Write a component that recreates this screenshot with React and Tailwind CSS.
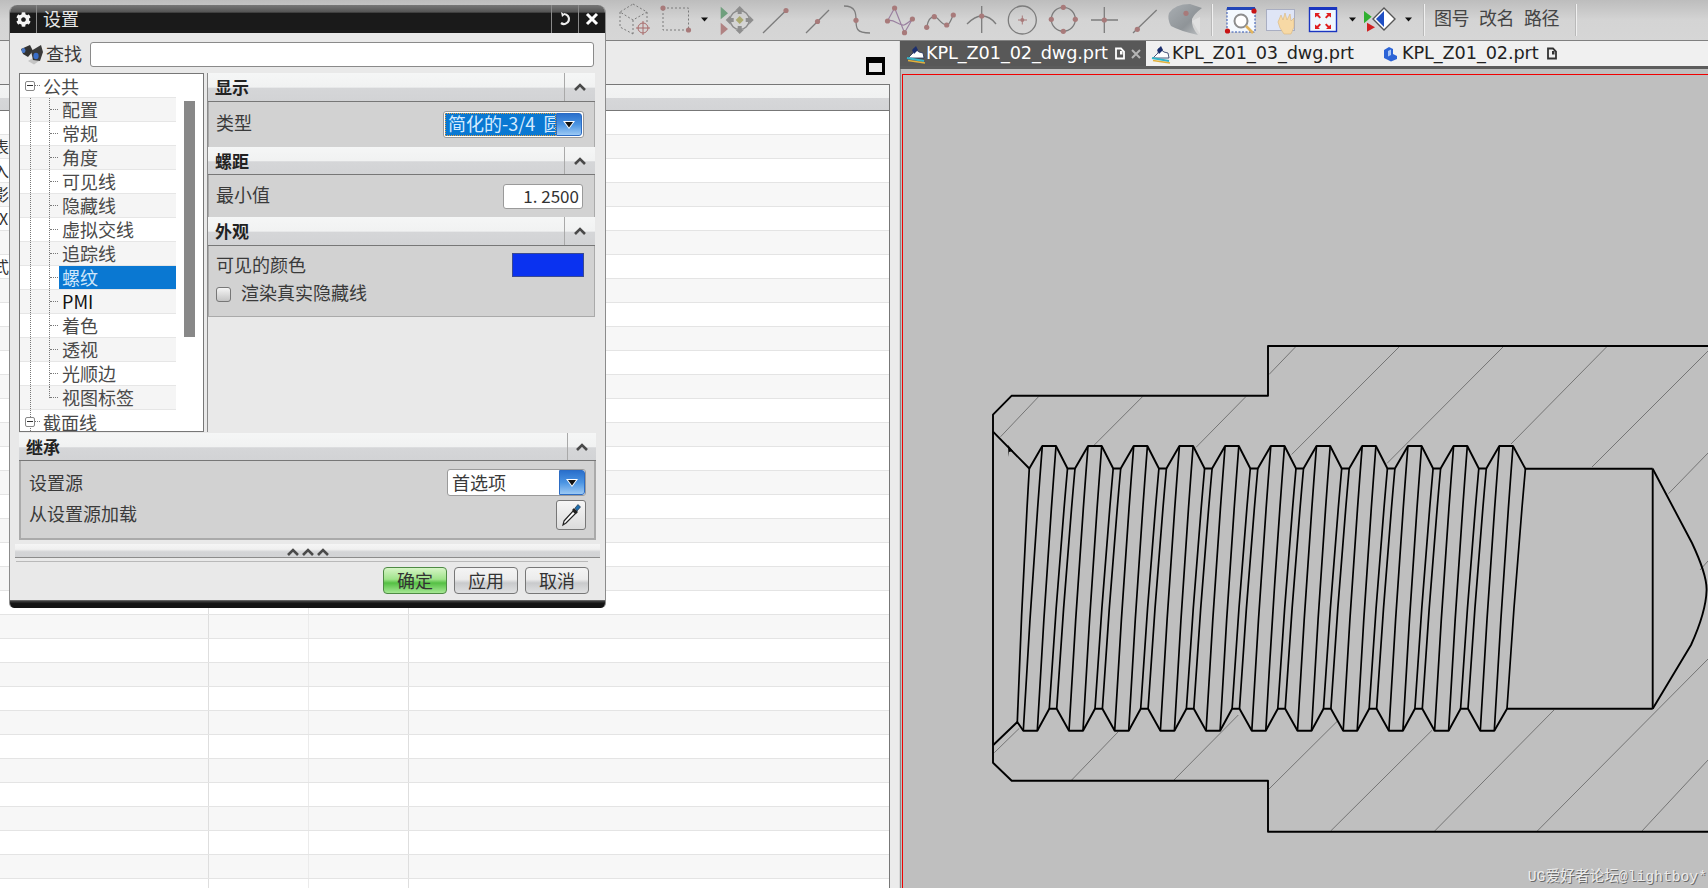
import { FaCog } from "react-icons/fa";

const treeRows = ["公共", "配置", "常规", "角度", "可见线", "隐藏线", "虚拟交线", "追踪线", "螺纹", "PMI", "着色", "透视", "光顺边", "视图标签", "截面线"];
const sideText = { 1: "表", 2: "入", 3: "影", 4: "X", 6: "式" };
const rowIds = Array.from({ length: 33 }, (_, i) => i);

const PITCH = 45.7;
const teeth = Array.from({ length: 11 }, (_, k) => k);

const topThread =
	"M993 431.7 L1029.3 468.5 " +
	teeth.map((k) => {
		const o = k * PITCH;
		const crest = `L${1042.3 + o} 446 L${1056 + o} 446 `;
		return k < 10 ? crest + `L${1067.5 + o} 468.5 L${1075 + o} 468.5 ` : crest;
	}).join("") +
	"L1525.4 468.8 L1652.7 468.8";

const bottomThread =
	"M993.3 745 L1017.3 722 L1023.3 730.7 " +
	teeth.map((k) => {
		const o = k * PITCH;
		const deep = `L${1023.3 + o} 730.7 L${1037.3 + o} 730.7 `;
		return k < 10 ? deep + `L${1049.3 + o} 708.7 L${1056.7 + o} 708.7 ` : deep;
	}).join("") +
	"L1507 708.7 L1652.7 708.7";

const helix = (x1, y1, x2, y2) => `M${x1} ${y1} Q${(x1 + x2) / 2 - 1.5} ${(y1 + y2) / 2} ${x2} ${y2}`;

const helixLines = [
	helix(1029.3, 468.5, 1017.3, 722),
	helix(1525.4, 468.8, 1507, 708.7),
	...teeth.flatMap((k) => {
		const o = k * PITCH;
		const crest = [
			helix(1042.3 + o, 446, 1023.3 + o, 730.7),
			helix(1056 + o, 446, 1037.3 + o, 730.7),
		];
		if (k === 10) return crest;
		return [
			...crest,
			helix(1067.5 + o, 468.5, 1049.3 + o, 708.7),
			helix(1075 + o, 468.5, 1056.7 + o, 708.7),
		];
	}),
];

const hatching = [
	[1296.4, 346, 1269, 374.5], [1399, 347, 1291.6, 454.5], [1503, 347, 1387, 463.4], [1606.5, 347, 1511, 444],
	[1708, 351, 1592, 467], [1708, 453, 1668.5, 493.7], [1708, 561, 1700, 570], [1038.7, 396.5, 1000.5, 436.8],
	[1142.7, 396.5, 1093.6, 445.7], [1246, 396.5, 1196, 447.4], [1019.3, 728.3, 994.3, 752.7], [1118.3, 731.7, 1071.7, 780],
	[1238.3, 715, 1174, 780], [1337, 721.5, 1269, 789], [1432, 730.3, 1330.7, 831], [1554, 710, 1434.7, 831],
	[1708, 659, 1537.3, 831], [1708, 760, 1642, 831],
];

// toolbar icons use page coordinates, the viewBox shifts them into their box
function Ico({ x, w, children }) {
	return (
		<svg width={w} height={40} viewBox={`${x} 0 ${w} 40`} className="shrink-0">
			{children}
		</svg>
	);
}

const Dot = ({ x, y, r = 2.6 }) => <circle cx={x} cy={y} r={r} fill="#a87a7a" />;

function Drop({ x }) {
	return (
		<Ico x={x} w={16}>
			<path d={`M${x + 5} 17.5 h7 l-3.5 4 z`} fill="#111" />
		</Ico>
	);
}

function Separator() {
	return <div className="w-[2px] h-[32px] bg-[#f0f0f0] border-l border-[#b9b9b9]" />;
}

function Chevron({ className = "" }) {
	return (
		<svg width="14" height="10" viewBox="0 0 14 10" className={className}>
			<path d="M2 8 L7 3 L12 8" fill="none" stroke="#4a4a4a" strokeWidth="2.6" />
		</svg>
	);
}

function SectionHeader({ title, h, sep }) {
	return (
		<div className={`${h} flex items-stretch border-b border-[#777] bg-[linear-gradient(#f5f6f6_0%,#f1f2f2_50%,#d5d6d8_55%,#d2d3d5_100%)]`}>
			<span className="flex-1 pl-[7px] text-[17px] font-bold text-[#222] leading-[28px]">{title}</span>
			<div className={`${sep} flex items-center justify-center border-l border-[#a9a9a9]`}>
				<Chevron />
			</div>
		</div>
	);
}

function DropButton() {
	return (
		<div className="w-[26px] h-full flex items-center justify-center rounded-r-[3px] border border-[#2c6cc4] bg-[linear-gradient(#2a70cc_0%,#4b94e2_50%,#9cc9f4_100%)]">
			<svg width="14" height="10" viewBox="0 0 14 10">
				<path d="M1 1 H13 L7 9 Z" fill="#fff" />
				<path d="M3 2 H11 L7 7.5 Z" fill="#111" />
			</svg>
		</div>
	);
}

function DialogButton({ label, green }) {
	const tone = green
		? "border-[#4e8a44] bg-[linear-gradient(#d6f5c6_0%,#9fe38a_45%,#55c044_60%,#a6e894_100%)]"
		: "border-[#777] bg-[linear-gradient(#f4f4f4_0%,#ececec_45%,#c9cacc_60%,#dfe0e1_100%)]";
	return (
		<button className={`w-[64px] h-[27px] rounded-[4px] border text-[18px] leading-[22px] pb-[2px] text-[#333] ${tone}`}>
			{label}
		</button>
	);
}

function DocMark({ color }) {
	return (
		<svg width="12" height="13" viewBox="0 0 12 13" className="shrink-0">
			<path d="M2 1.5 H7 L10 4.5 V11.5 H2 Z" fill="none" stroke={color} strokeWidth="1.8" />
			<path d="M6 4 H8.5 V7.5 H6 Z" fill={color} />
		</svg>
	);
}

function DrawingMark() {
	return (
		<svg width="20" height="20" viewBox="0 0 20 20" className="shrink-0">
			<path d="M2 14 L7 9 L8 4 L13 8 L17 9 L18 14 Z" fill="#fff" stroke="#20305a" strokeWidth="0.8" />
			<path d="M6 6 L10 2 L12 6 L8 10 Z" fill="#1c2f6e" />
			<path d="M1 14 L18 17" stroke="#35b4c8" strokeWidth="1.8" />
			<path d="M2 16.5 L19 19" stroke="#e2b13c" strokeWidth="1.6" />
		</svg>
	);
}

export default function App() {
	return (
		<div className="relative w-[1708px] h-[888px] overflow-hidden bg-[#ebebeb] font-['Noto_Sans_CJK_SC',sans-serif]">
			{/* Toolbar */}
			<div className="h-[41px] pl-[616px] flex items-center border-b border-[#808080] bg-linear-to-b from-[#bdbdbd] via-[#d4d4d4] to-[#d6d6d6]">
				<Ico x={616} w={40}>
					<g fill="none" stroke="#7a7a7a" strokeDasharray="2 2">
						<path d="M633 4 L647 12 L633 20 L620 12 Z M620 12 V27 L633 34 M647 12 V22 M633 20 V34" />
					</g>
					<g fill="none" stroke="#a86a6a">
						<circle cx="643" cy="28" r="5" />
						<path d="M636 28 H650 M643 21 V35" />
					</g>
				</Ico>
				<Ico x={656} w={40}>
					<rect x="663" y="8" width="25.5" height="22" fill="none" stroke="#7a7a7a" strokeDasharray="2 2" />
					<Dot x={663} y={8} />
					<Dot x={688.5} y={30} />
				</Ico>
				<Drop x={696} />
				<Ico x={712} w={44}>
					<path d="M720.7 6.7 L728 13.3 L720.7 19.3 Z" fill="#6f9f7d" />
					<path d="M720.7 22.7 L728 29 L720.7 35.3 Z" fill="#b08282" />
					<circle cx="739.7" cy="20" r="9.5" fill="none" stroke="#8b8b8b" strokeWidth="1.4" />
					<path d="M739.7 6 l4.5 4.5 h-2.5 v3.5 h-4 v-3.5 h-2.5 z M739.7 34 l4.5 -4.5 h-2.5 v-3.5 h-4 v3.5 h-2.5 z M725.7 20 l4.5 -4.5 v2.5 h3.5 v4 h-3.5 v2.5 z M753.7 20 l-4.5 -4.5 v2.5 h-3.5 v4 h3.5 v2.5 z" fill="#8e8e8e" />
					<path d="M739.7 16 L743.7 20 L739.7 24 L735.7 20 Z" fill="#aaa96f" />
				</Ico>
				<Ico x={756} w={40}>
					<path d="M763 33 L786 10.5" stroke="#7c7c7c" strokeWidth="1.3" />
					<Dot x={786} y={10.5} />
				</Ico>
				<Ico x={796} w={42}>
					<path d="M806 33 L829 10" stroke="#7c7c7c" strokeWidth="1.3" />
					<Dot x={817.5} y={21.5} />
				</Ico>
				<Ico x={838} w={40}>
					<path d="M844 6 C856 6 856 14 856 20 C856 28 856 33 870 33" fill="none" stroke="#7c7c7c" strokeWidth="1.3" />
					<Dot x={856} y={20.3} />
				</Ico>
				<Ico x={878} w={40}>
					<path d="M894.6 8 L887.5 21 C893 18 899 26 904 25 C907 24 910 21 912.4 19 L904.5 32.7 L894.6 8" fill="none" stroke="#9a80a0" strokeWidth="1.2" />
					<Dot x={894.6} y={8} />
					<Dot x={887.5} y={21} />
					<Dot x={912.4} y={19} />
					<Dot x={904.5} y={32.7} />
				</Ico>
				<Ico x={918} w={42}>
					<path d="M926.7 27.3 C928 20 931 16.7 934.3 16.7 C938 16.7 941 25 946.7 25 C950 25 951 19 953.3 15" fill="none" stroke="#7c7c7c" strokeWidth="1.3" />
					<Dot x={926.7} y={27.3} />
					<Dot x={934.3} y={16.7} />
					<Dot x={946.7} y={25} />
					<Dot x={953.3} y={15} />
				</Ico>
				<Ico x={960} w={42}>
					<path d="M981.7 6 V33 M967 24 Q975 16 981.7 16 Q990 16 996 24" fill="none" stroke="#7c7c7c" strokeWidth="1.3" />
					<Dot x={981.7} y={16} />
				</Ico>
				<Ico x={1002} w={42}>
					<circle cx="1022.3" cy="20" r="14" fill="none" stroke="#7c7c7c" strokeWidth="1.3" />
					<path d="M1018 20 H1027 M1022.3 15.5 V24.5" stroke="#a87a7a" />
					<Dot x={1022.3} y={20} r={2} />
				</Ico>
				<Ico x={1044} w={42}>
					<circle cx="1063.3" cy="19.3" r="12" fill="none" stroke="#7c7c7c" strokeWidth="1.3" />
					<Dot x={1063.3} y={7.3} />
					<Dot x={1075.3} y={19.3} />
					<Dot x={1063.3} y={31.3} />
					<Dot x={1051.3} y={19.3} />
				</Ico>
				<Ico x={1086} w={40}>
					<path d="M1091 20 H1118 M1104.3 7 V33" stroke="#7c7c7c" strokeWidth="1.3" />
					<Dot x={1104.3} y={20} />
				</Ico>
				<Ico x={1126} w={36}>
					<path d="M1133 33 L1156.7 10" stroke="#7c7c7c" strokeWidth="1.3" />
					<Dot x={1137.3} y={29.3} />
				</Ico>
				<Ico x={1162} w={44}>
					<defs>
						<linearGradient id="surf" x1="0" y1="0" x2="1" y2="1">
							<stop offset="0" stopColor="#a9aeb2" />
							<stop offset="0.6" stopColor="#8f9498" />
							<stop offset="1" stopColor="#c0c3c5" />
						</linearGradient>
					</defs>
					<path d="M1169 13 Q1175 4 1190 4 L1202 8 Q1194 14 1192 19 Q1191 27 1198 35 Q1180 31 1171 26 Q1167 19 1169 13 Z" fill="url(#surf)" />
					<path d="M1192 21 L1200 17 L1200 34 Z" fill="#e0e0e0" />
					<Dot x={1186} y={13.3} />
				</Ico>
				<div className="w-[12px] flex justify-center">
					<Separator />
				</div>
				<Ico x={1218} w={42}>
					<rect x="1227" y="8" width="28" height="24" fill="#f4f9fe" stroke="#2b4fb0" strokeDasharray="2 1.5" />
					<rect x="1227" y="7" width="28" height="3" fill="#2245b8" />
					<circle cx="1241" cy="21" r="6.5" fill="#fff" stroke="#8d8d8d" strokeWidth="2" />
					<path d="M1246 26 L1253 33" stroke="#e2b45c" strokeWidth="2.6" />
					<circle cx="1254" cy="11" r="2.6" fill="#c81414" />
					<circle cx="1227.5" cy="31" r="2.6" fill="#c81414" />
				</Ico>
				<Ico x={1260} w={42}>
					<rect x="1266.5" y="9.5" width="28" height="21" fill="#dfe5f6" stroke="#a9aec2" />
					<path d="M1278 22 L1281 15 L1283 20 L1285 13 L1287 20 L1290 14 L1291 21 L1294 18 L1294 27 L1291 34 L1284 34 L1280 28 Z" fill="#f7d9a5" stroke="#d8b67c" strokeWidth="0.6" />
				</Ico>
				<Ico x={1302} w={42}>
					<rect x="1309.5" y="8" width="27" height="23.5" fill="#eff8fe" stroke="#1a35c0" strokeWidth="1.4" />
					<rect x="1309" y="7" width="28" height="3" fill="#1a35c0" />
					<path d="M1315 13 h5 l-1.6 1.6 l2.6 2.6 l-1.4 1.4 l-2.6 -2.6 l-2 1.6 z M1331 13 h-5 l1.6 1.6 l-2.6 2.6 l1.4 1.4 l2.6 -2.6 l2 1.6 z M1315 29 h5 l-1.6 -1.6 l2.6 -2.6 l-1.4 -1.4 l-2.6 2.6 l-2 -1.6 z M1331 29 h-5 l1.6 -1.6 l-2.6 -2.6 l1.4 -1.4 l2.6 2.6 l2 -1.6 z" fill="#e02020" />
				</Ico>
				<Drop x={1344} />
				<Ico x={1360} w={40}>
					<path d="M1364 11 L1371.7 16.7 L1364 23.3 Z" fill="#2fb030" />
					<path d="M1367 22.7 L1375 27.3 L1367 31.7 Z" fill="#d02020" />
					<path d="M1384 8 L1395 19 L1384 30 L1373 19 Z" fill="#fff" stroke="#555" strokeWidth="1.4" />
					<path d="M1384 11 L1384 27 L1376 19 Z" fill="#1f4fc4" />
				</Ico>
				<Drop x={1400} />
				<div className="w-[16px] flex justify-center">
					<Separator />
				</div>
				<div className="pl-[2px] pb-[5px] w-[143px] flex gap-[10px] text-[18px] text-[#444] whitespace-nowrap">
					<span className="tracking-[-0.5px]">图号</span>
					<span className="tracking-[-0.5px]">改名</span>
					<span className="tracking-[-0.5px]">路径</span>
				</div>
				<Separator />
			</div>

			<div className="flex h-[847px]">
				{/* Part list panel */}
				<div className="w-[900px] shrink-0 border-r border-[#d8d8d8]">
					<div className="h-[43px] flex justify-end items-start pt-[16px] pr-[14px]">
						<div className="w-[19px] h-[18px] border-[3px] border-t-[6px] border-black" />
					</div>
					<div className="mr-[9px] border-t border-r border-[#777] bg-white">
						<div className="h-[26px] border-b border-[#777] bg-[linear-gradient(#f3f4f4_0%,#f0f1f1_50%,#d6d7d9_52%,#d3d4d6_100%)]" />
						{rowIds.map((id) => (
							<div key={id} className={`h-[24px] grid grid-cols-[209px_100px_100px_1fr] border-b border-[#e4e4e4] ${id % 2 ? "bg-[#f7f7f7]" : "bg-white"}`}>
								<div className="border-r border-[#dedede] overflow-hidden">
									<span className={`block text-[16px] leading-[23px] text-[#333] ${id === 4 ? "-ml-[1px]" : "-ml-[7px]"}`}>{sideText[id]}</span>
								</div>
								<div className="border-r border-[#ebebeb]" />
								<div className="border-r border-[#dedede]" />
								<div />
							</div>
						))}
					</div>
				</div>

				{/* Drawing area */}
				<div className="flex-1 flex flex-col min-w-0">
					<div className="h-[25px] flex items-stretch bg-[#f0f0f0] text-[17.7px] leading-[25px] font-['DejaVu_Sans',sans-serif] whitespace-nowrap">
						<div className="w-[246px] pl-[6px] flex items-center bg-[#585858] text-white">
							<DrawingMark />
							<span className="tracking-[-0.1px]">KPL_Z01_02_dwg.prt</span>
							<span className="ml-[6px]">
								<DocMark color="#fff" />
							</span>
							<svg width="10" height="10" viewBox="0 0 10 10" className="ml-[5px]">
								<path d="M1 1 L9 9 M9 1 L1 9" stroke="#b5b5b5" strokeWidth="2" />
							</svg>
						</div>
						<div className="w-[237px] pl-[5px] flex items-center gap-px text-[#222]">
							<DrawingMark />
							<span className="tracking-[-0.1px]">KPL_Z01_03_dwg.prt</span>
						</div>
						<div className="flex items-center gap-[4px] text-[#222]">
							<svg width="15" height="16" viewBox="0 0 15 16" className="shrink-0">
								<path d="M1 12 V4 L6 1 L10 3 V8 L14 10 V13 L8 15.5 Z" fill="#2b63d6" />
								<path d="M5 5 L8 3.5 V9 L5 10.5 Z" fill="#a9c6f5" />
							</svg>
							<span className="tracking-[-0.1px]">KPL_Z01_02.prt</span>
							<span className="ml-[3px]">
								<DocMark color="#333" />
							</span>
						</div>
					</div>
					<div className="h-[3px] bg-[#5c5c5c]" />
					<div className="flex-1 min-h-0 bg-[#bfbfbf] pt-[5px] pl-[1px] border-l border-[#8a8a8a]">
						<div className="relative h-full border-t border-l border-[#f00000]">
							<svg viewBox="903 75 806 813" className="block w-[806px] h-[813px]">
								<g stroke="#555" strokeWidth="0.7">
									{hatching.map((l, i) => (
										<line key={i} x1={l[0]} y1={l[1]} x2={l[2]} y2={l[3]} />
									))}
								</g>
								<g fill="none" stroke="#000" strokeWidth="1.9" strokeLinejoin="round">
									<path d="M1709 346 H1268 V395.8 H1011.5 L993 414.7 V762.7 L1011.7 780.7 H1268 V831.8 H1709" />
									<path d={topThread} />
									<path d={bottomThread} />
									<path d="M1652.7 468.8 V708.7" />
									<path d="M1652.7 468.8 L1692 543 Q1707 575 1706.6 590 Q1706 612 1691 645 L1652.7 708.7" />
									{helixLines.map((d, i) => (
										<path key={i} d={d} strokeWidth="1.7" />
									))}
								</g>
								<path d="M1008 445 L1013 451 L1009 452 L1008.6 457 Z" fill="#000" />
							</svg>
							<span className="absolute right-[1px] bottom-[2px] text-[14.7px] leading-[18px] text-[#ececec] font-['Liberation_Mono','Noto_Sans_CJK_SC',monospace] [text-shadow:1px_1px_0_#6a6a6a] whitespace-nowrap">
								UG爱好者论坛@lightboy*
							</span>
						</div>
					</div>
				</div>
			</div>

			{/* Settings dialog */}
			<div className="absolute left-[9px] top-[5px] w-[597px] h-[603px] flex flex-col rounded-t-[8px] rounded-b-[5px] overflow-hidden bg-[#e9e9e9] border-x border-[#8c8c8c]">
				<div className="h-[28px] shrink-0 flex items-stretch text-[#e6e6e6] bg-[linear-gradient(#777_0%,#555_25%,#1a1a1a_30%,#1a1a1a_100%)]">
					<div className="w-[27px] flex items-center justify-center border-r border-[#8a8a8a]">
						<FaCog size={15} color="#f4f4f4" />
					</div>
					<span className="flex-1 pl-[6px] text-[18px] leading-[26px]">设置</span>
					<div className="w-[27px] flex items-center justify-center border-l border-[#8a8a8a]">
						<svg width="14" height="14" viewBox="0 0 14 14">
							<path d="M6 2 A5 5 0 1 1 3 11" fill="none" stroke="#eee" strokeWidth="2.2" />
							<path d="M3 0 L7 2.5 L4 5 Z" fill="#eee" />
						</svg>
					</div>
					<div className="w-[27px] flex items-center justify-center border-l border-[#8a8a8a]">
						<svg width="14" height="14" viewBox="0 0 14 14">
							<path d="M2 2 L12 12 M12 2 L2 12" stroke="#fff" strokeWidth="3" />
						</svg>
					</div>
				</div>

				{/* Search */}
				<div className="h-[40px] shrink-0 flex items-center pl-[10px] pr-[11px] pt-[2px]">
					<svg width="24" height="22" viewBox="0 0 24 22" className="shrink-0">
						<path d="M8 18 L14 21.5 L19 18 L13 15 Z" fill="#c4c4c4" />
						<path d="M1 6 L10 2 L13 8 L8 14 L3 11 Z" fill="#333" />
						<path d="M11 8 L21 2 L23 9 L20 18 L13 17 Z" fill="#3a3a3a" />
						<ellipse cx="3.5" cy="7.5" rx="2" ry="2.5" fill="#4a78c8" />
						<ellipse cx="16" cy="13" rx="2.6" ry="3.2" fill="#3a6ec8" />
					</svg>
					<span className="ml-[2px] pb-[2px] text-[18px] text-[#3a3a3a]">查找</span>
					<div className="ml-[8px] flex-1 h-[25px] rounded-[3px] bg-white border border-[#8a8a8a]" />
				</div>

				{/* Tree and property panes */}
				<div className="h-[359px] shrink-0 flex pl-[9px] pr-[10px]">
					<div className="w-[185px] shrink-0 flex border border-[#777] bg-white overflow-hidden">
						<div className="w-[156px] shrink-0">
							{treeRows.map((row, i) => {
								const top = i === 0 || i === 14;
								const child = !top;
								return (
									<div key={row} className={`h-[24px] flex items-stretch border-b border-[#e6e6e6] ${i % 2 ? "bg-[#f5f5f5]" : "bg-white"}`}>
										<div className={`w-[11px] shrink-0 border-r border-dotted border-[#777] ${i === 0 ? "border-transparent" : ""}`} />
										{top ? (
											<div className="flex items-center -ml-[6px]">
												<div className="w-[10px] h-[10px] flex items-center justify-center rounded-[2px] bg-white border border-[#888]">
													<div className="w-[6px] h-px bg-[#333]" />
												</div>
												<div className="w-[5px] border-t border-dotted border-[#777]" />
											</div>
										) : (
											<div className={`w-[19px] shrink-0 border-r border-dotted border-[#777] ${i === 13 ? "h-[12px]" : ""}`} />
										)}
										{child && (
											<div className="w-[8px] shrink-0 flex items-center">
												<div className="w-full border-t border-dotted border-[#777]" />
											</div>
										)}
										<span className={`flex-1 text-[18px] whitespace-nowrap ${top ? "ml-[2px] pl-px leading-[25px]" : "ml-px pl-[3px] leading-[23px]"} ${row === "螺纹" ? "bg-[#0a78d2] text-[#cfe6fa]" : row === "PMI" ? "text-[#111]" : "text-[#4a4a4a]"}`}>
											{row}
										</span>
									</div>
								);
							})}
						</div>
						<div className="flex-1 pl-[8px] pt-[27px]">
							<div className="w-[11px] h-[236px] bg-[#888]" />
						</div>
					</div>

					<div className="ml-[3px] flex-1 border-l border-[#8a8a8a]">
						<SectionHeader title="显示" h="h-[29px]" sep="w-[31px]" />
						<div className="h-[45px] flex items-center justify-between pl-[7px] pr-[10px] bg-[#d2d2d2] border-x border-[#aaa]">
							<span className="pb-[4px] text-[18px] text-[#3a3a3a]">类型</span>
							<div className="w-[141px] h-[27px] flex rounded-[3px] bg-white border border-[#9a9a9a] p-px">
								<div className="flex-1 min-w-0 overflow-hidden bg-[#0a78d2] border border-dotted border-[#e8a040] pl-[2px] text-[18px] leading-[18px] text-[#d5ebff] whitespace-nowrap">
									简化的-3/4{"\u00a0\u00a0"}圆
								</div>
								<DropButton />
							</div>
						</div>
						<SectionHeader title="螺距" h="h-[28px]" sep="w-[31px]" />
						<div className="h-[42px] flex items-center justify-between pl-[7px] pr-[11px] bg-[#d2d2d2] border-x border-[#aaa]">
							<span className="pb-[4px] text-[18px] text-[#3a3a3a]">最小值</span>
							<div className="w-[80px] h-[25px] rounded-[3px] bg-white border border-[#9a9a9a] pr-[3px] text-right text-[17px] leading-[21px] text-[#333]">
								1. 2500
							</div>
						</div>
						<SectionHeader title="外观" h="h-[29px]" sep="w-[31px]" />
						<div className="h-[71px] pl-[7px] pr-[10px] pt-[7px] bg-[#d2d2d2] border-x border-b border-[#aaa]">
							<div className="flex items-center justify-between h-[24px]">
								<span className="pb-[2px] text-[18px] text-[#3a3a3a]">可见的颜色</span>
								<div className="w-[72px] h-[24px] bg-[#0a32f0] border border-[#3a4a90]" />
							</div>
							<div className="mt-[4px] flex items-center gap-[10px] h-[26px]">
								<div className="w-[15px] h-[15px] rounded-[3px] border border-[#777] bg-linear-to-b from-[#f5f5f5] to-[#c4c4c4]" />
								<span className="pb-[4px] text-[18px] text-[#3a3a3a]">渲染真实隐藏线</span>
							</div>
						</div>
					</div>
				</div>

				{/* Inherit section */}
				<div className="mx-[9px] mt-px shrink-0">
					<SectionHeader title="继承" h="h-[28px]" sep="w-[29px]" />
					<div className="h-[79px] pl-[8px] pr-[8px] pt-[8px] bg-[#d2d2d2] border-x-2 border-b-2 border-[#aaa]">
						<div className="flex items-center justify-between h-[27px]">
							<span className="text-[18px] text-[#3a3a3a]">设置源</span>
							<div className="w-[139px] h-[27px] flex rounded-[3px] bg-white border border-[#9a9a9a]">
								<span className="flex-1 pl-[4px] text-[18px] leading-[25px] text-[#3a3a3a]">首选项</span>
								<DropButton />
							</div>
						</div>
						<div className="mt-[4px] flex items-center justify-between h-[30px]">
							<span className="pb-[4px] text-[18px] text-[#3a3a3a]">从设置源加载</span>
							<div className="w-[30px] h-[30px] flex items-center justify-center rounded-[3px] border border-[#777] bg-linear-to-b from-[#f6f6f6] to-[#dcdcdc]">
								<svg width="22" height="24" viewBox="0 0 22 24">
									<path d="M4 18 L13 8 L15.5 10.5 L6 20 L3 22 Z" fill="#fff" stroke="#222" strokeWidth="1.2" />
									<path d="M12 7 L16 11 L18 9 L14 5 Z" fill="#222" />
									<path d="M15 5 L18 1.5 L20.5 4 L17 8 Z" fill="#1f6fb0" stroke="#123" strokeWidth="0.6" />
								</svg>
							</div>
						</div>
					</div>
				</div>

				{/* Collapse bar */}
				<div className="mx-[5px] mt-[4px] h-[14px] shrink-0 flex items-center justify-center gap-px border-b border-[#8c8c8c] bg-[linear-gradient(#f5f5f5_0%,#f0f0f0_40%,#d4d5d7_60%,#d2d3d5_100%)]">
					<Chevron className="-mb-[2px]" />
					<Chevron className="-mb-[2px]" />
					<Chevron className="-mb-[2px]" />
				</div>
				<div className="mx-[6px] mt-[3px] h-px shrink-0 w-[572px] bg-[#b9b9b9]" />

				{/* Actions */}
				<div className="mt-[5px] pr-[16px] flex justify-end gap-[7px] shrink-0">
					<DialogButton label="确定" green />
					<DialogButton label="应用" />
					<DialogButton label="取消" />
				</div>

				<div className="mt-auto h-[8px] shrink-0 bg-[linear-gradient(#777_0%,#333_20%,#141414_45%,#141414_100%)]" />
			</div>
		</div>
	);
}
